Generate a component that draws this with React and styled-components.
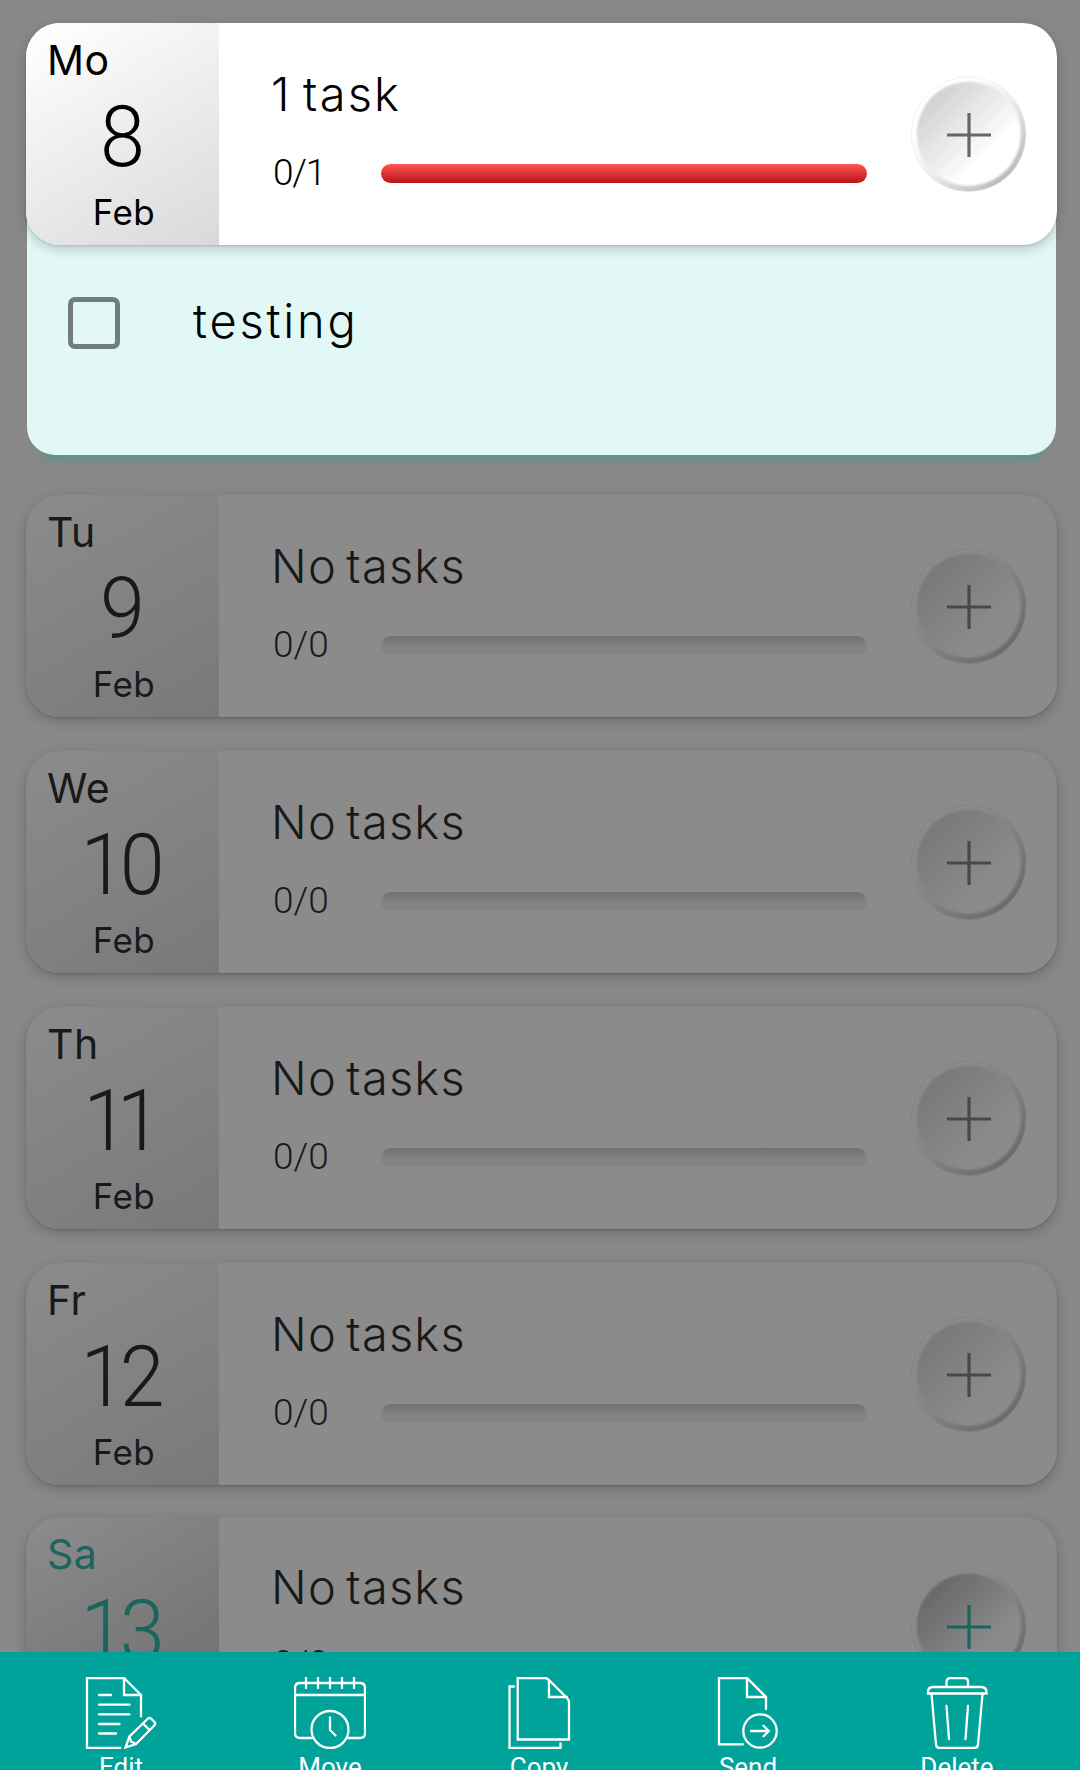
import React from "react";
import styled, { createGlobalStyle, css } from "styled-components";

const GlobalStyle = createGlobalStyle`
  * { box-sizing: border-box; }
  html, body { margin: 0; padding: 0; background: #888888; }
  body { font-family: Inter, Roboto, "Liberation Sans", sans-serif; }
`;

const Screen = styled.div`
  display: flex;
  flex-direction: column;
  width: 1080px;
  height: 1770px;
  overflow: hidden;
  background: #888888;
`;

const DayList = styled.main`
  display: flex;
  flex-direction: column;
  flex: none;
  gap: 34px;
  height: 1652px;
  padding: 23px 23px 0 26px;
  overflow: hidden;
`;

const ActiveDay = styled.section`
  display: flex;
  flex-direction: column;
  flex: none;
  margin-bottom: 6px;
`;

const Card = styled.article`
  position: relative;
  z-index: 1;
  display: flex;
  flex: none;
  width: 1031px;
  height: 222px;
  border-radius: 34px;
  color: ${(p) => (p.$active ? "#000000" : "#191919")};
  background: ${(p) => (p.$active ? "#ffffff" : "#8b8b8b")};
  box-shadow: 0 1px 2px rgba(0, 0, 0, 0.14), 0 4px 11px 1px rgba(0, 0, 0, 0.17);
  margin-top: ${(p) => (p.$weekend ? "-2px" : "0")};
`;

const DateColumn = styled.div`
  flex: none;
  width: 193px;
  padding-top: 12px;
  border-radius: 34px 0 0 34px;
  color: ${(p) => (p.$weekend ? "#1b655f" : "inherit")};
  background: linear-gradient(
    150deg,
    ${(p) =>
      p.$active
        ? "#ffffff 3%, #d9d9d9"
        : p.$weekend
        ? "#8b8b8b 3%, #6b6b6b"
        : "#8b8b8b 3%, #797979"}
  );
`;

const Weekday = styled.div`
  height: 50px;
  padding-left: 21px;
  font-size: 41px;
  font-weight: 400;
  line-height: 50px;
  letter-spacing: 0.5px;
`;

const DayNumber = styled.div`
  height: 102px;
  font-family: Roboto, sans-serif;
  font-size: 86px;
  font-weight: 300;
  line-height: 104px;
  letter-spacing: ${(p) => p.$tracking}px;
  text-indent: ${(p) => p.$tracking}px;
  text-align: center;
  transform: scaleX(0.94);
`;

const Month = styled.div`
  height: 50px;
  padding-left: 3px;
  font-size: 35px;
  font-weight: 400;
  line-height: 50px;
  letter-spacing: 0.4px;
  text-align: center;
`;

const Info = styled.div`
  flex: none;
  width: 648px;
  padding: ${(p) => (p.$weekend ? "40px" : "41px")} 0 0 54px;
`;

const Title = styled.div`
  height: 60px;
  margin-left: -2px;
  font-size: 47px;
  font-weight: 300;
  line-height: 60px;
  letter-spacing: ${(p) => (p.$active ? "2.2px" : "1.2px")};
  word-spacing: ${(p) => (p.$active ? "-4px" : "-5px")};
`;

const ProgressRow = styled.div`
  display: flex;
  align-items: center;
  height: 49px;
  margin-top: ${(p) => (p.$weekend ? "22px" : "24px")};
`;

const Count = styled.div`
  width: 108px;
  font-family: Roboto, sans-serif;
  font-size: 37px;
  font-weight: 300;
  line-height: 49px;
  letter-spacing: ${(p) => (p.$active ? "-1.2px" : "0")};
`;

const barFill = css`
  background: linear-gradient(180deg, #ff5758 0%, #e03838 45%, #b81616 100%);
`;

const barEmpty = css`
  background: linear-gradient(180deg, #707070 0%, #7e7e7e 38%, #848484 60%, #848484 100%);
`;

const Bar = styled.div`
  width: 486px;
  height: 19px;
  margin-top: 1px;
  border-radius: 9.5px;
  ${(p) => (p.$active ? barFill : barEmpty)}
`;

const AddButton = styled.button`
  display: grid;
  place-items: center;
  flex: none;
  width: 116px;
  height: 117px;
  margin: ${(p) => (p.$weekend ? "51px" : "53px")} 0 0 44px;
  padding: 0;
  border: 0;
  background: none;
`;

const TaskPanel = styled.div`
  display: flex;
  align-items: flex-start;
  width: 1029px;
  height: 245px;
  margin: -35px 0 0 1px;
  padding: 87px 0 0 41px;
  border-radius: 0 0 28px 28px;
  background: #e1f8f6;
  box-shadow: 0 15px 6px -9px #63928a;
`;

const Checkbox = styled.span`
  width: 52px;
  height: 52px;
  border: 5px solid #727e7d;
  border-radius: 7px;
`;

const TaskText = styled.span`
  margin: -6px 0 0 73px;
  color: #000000;
  font-size: 47px;
  font-weight: 300;
  line-height: 60px;
  letter-spacing: 2.8px;
`;

const Toolbar = styled.nav`
  position: relative;
  z-index: 2;
  display: flex;
  flex: none;
  height: 118px;
  padding: 25px 0 0 16px;
  overflow: hidden;
  background: #00a39a;
`;

const Action = styled.div`
  display: flex;
  flex-direction: column;
  align-items: center;
  flex: none;
  width: 209px;
  padding-left: 1px;
  color: #ffffff;
  font-family: Roboto, sans-serif;
  font-size: 26px;
  line-height: 30px;

  svg {
    flex: none;
    margin-bottom: 3px;
  }
`;

const Glyph = ({ children }) => (
  <svg
    width="72"
    height="72"
    viewBox="0 0 72 72"
    fill="none"
    stroke="currentColor"
    strokeWidth="2.3"
    strokeLinecap="round"
  >
    {children}
  </svg>
);

const EditIcon = () => (
  <Glyph>
    <path d="M35 71H2V1H39L56 18V39" strokeLinecap="square" />
    <path d="M39 1V18H56" />
    <path d="M14 18H26M14 27.7H44.5M14 37.3H44.5M14 47H34.5M14 56.5H31" />
    <path d="M40.5 70.5L44.5 59.5L62.5 42Q64.5 40 66.5 42L69.3 44.8Q71 46.8 69 48.8L51 67L40.5 70.5Z" />
    <path d="M58 46.5L64.5 53M44.5 59.5L46 64.5L51 67" />
  </Glyph>
);

const MoveIcon = () => (
  <Glyph>
    <path d="M18 61H6Q1 61 1 56V11Q1 6 6 6H66Q71 6 71 11V56Q71 61 66 61H54" />
    <path d="M1 18H71M12 1V11M24 1V11M36 1V11M48 1V11M60 1V11" />
    <circle cx="36" cy="52.5" r="18.5" />
    <path d="M36 40.5V53L41.5 58.5" />
  </Glyph>
);

const CopyIcon = () => (
  <Glyph>
    <path d="M14.7 1H42Q44 1 46 3L64 21Q66 23 66 25V62.5H14.7Z" />
    <path d="M46 3.5V20H64" />
    <path d="M11 9.5H6.5V71H57.5V66.5" />
  </Glyph>
);

const SendIcon = () => (
  <Glyph>
    <path d="M31 67.3H7V1H35L54 20V32" />
    <path d="M35 1V20H54" />
    <circle cx="48" cy="54" r="16.7" />
    <path d="M39 54H56.5M51.5 48.8L56.8 54L51.5 59.2" />
  </Glyph>
);

const DeleteIcon = () => (
  <Glyph>
    <path d="M25.5 9V5Q25.5 1 29.5 1H43Q47 1 47 5V9" />
    <path d="M7 16.5V15Q7 10 12 10H60Q65.5 10 65.5 15V16.5Z" />
    <path d="M10.5 17L15 67.5Q15.4 71 18.5 71H53.5Q56.6 71 57 67.5L61.5 17" />
    <path d="M25.5 29L28 62M47 29L44.5 62" />
  </Glyph>
);

const PlusDisc = ({ active, weekend }) => {
  const kind = active ? "active" : weekend ? "weekend" : "plain";
  const light = active ? "#ffffff" : "#8b8b8b";
  const inner = active ? "#d3d3d3" : weekend ? "#6a6a6a" : "#797979";
  const rim = active ? "#b9b9b9" : "#6a6a6a";
  const edge = active ? "#ececec" : "#838383";
  const line = weekend ? "#1b655f" : active ? "#666666" : "#484848";
  return (
    <svg width="116" height="117" viewBox="0 0 116 117">
      <defs>
        <linearGradient id={`rim-${kind}`} x1="0.15" y1="0.12" x2="0.85" y2="0.88">
          <stop offset="0.2" stopColor={light} />
          <stop offset="0.55" stopColor={edge} />
          <stop offset="1" stopColor={rim} />
        </linearGradient>
        <linearGradient id={`disc-${kind}`} x1="0.12" y1="0.15" x2="0.82" y2="0.85">
          <stop offset="0.05" stopColor={inner} />
          <stop offset="0.8" stopColor={light} />
        </linearGradient>
        <filter id={`soft-${kind}`} x="-10%" y="-10%" width="120%" height="120%">
          <feGaussianBlur stdDeviation="1.1" />
        </filter>
      </defs>
      <circle cx="57.7" cy="58.3" r="57.4" fill={`url(#rim-${kind})`} stroke={edge} strokeWidth="0.8" />
      <circle cx="57.8" cy="57.8" r="52" fill={`url(#disc-${kind})`} filter={`url(#soft-${kind})`} />
      <path d="M36 59H80M58 37V81" stroke={line} strokeWidth="3.2" />
    </svg>
  );
};

const DayCard = ({ weekday, day, tracking = 0, title, count, active, weekend }) => (
  <Card $active={active} $weekend={weekend}>
    <DateColumn $active={active} $weekend={weekend}>
      <Weekday>{weekday}</Weekday>
      <DayNumber $tracking={tracking}>{day}</DayNumber>
      <Month>Feb</Month>
    </DateColumn>
    <Info $weekend={weekend}>
      <Title $active={active}>{title}</Title>
      <ProgressRow $weekend={weekend}>
        <Count $active={active}>{count}</Count>
        <Bar $active={active} />
      </ProgressRow>
    </Info>
    <AddButton $weekend={weekend} aria-label="Add">
      <PlusDisc active={active} weekend={weekend} />
    </AddButton>
  </Card>
);

const days = [
  { weekday: "Tu", day: 9 },
  { weekday: "We", day: 10, tracking: -6 },
  { weekday: "Th", day: 11, tracking: -12 },
  { weekday: "Fr", day: 12, tracking: -6 },
  { weekday: "Sa", day: 13, tracking: -6, weekend: true },
];

const actions = [
  { label: "Edit", Icon: EditIcon },
  { label: "Move", Icon: MoveIcon },
  { label: "Copy", Icon: CopyIcon },
  { label: "Send", Icon: SendIcon },
  { label: "Delete", Icon: DeleteIcon },
];

export default function App() {
  return (
    <>
      <GlobalStyle />
      <Screen>
        <DayList>
          <ActiveDay>
            <DayCard weekday="Mo" day={8} title="1 task" count="0/1" active />
            <TaskPanel>
              <Checkbox />
              <TaskText>testing</TaskText>
            </TaskPanel>
          </ActiveDay>
          {days.map((d) => (
            <DayCard key={d.day} title="No tasks" count="0/0" {...d} />
          ))}
        </DayList>
        <Toolbar>
          {actions.map(({ label, Icon }) => (
            <Action key={label}>
              <Icon />
              {label}
            </Action>
          ))}
        </Toolbar>
      </Screen>
    </>
  );
}
